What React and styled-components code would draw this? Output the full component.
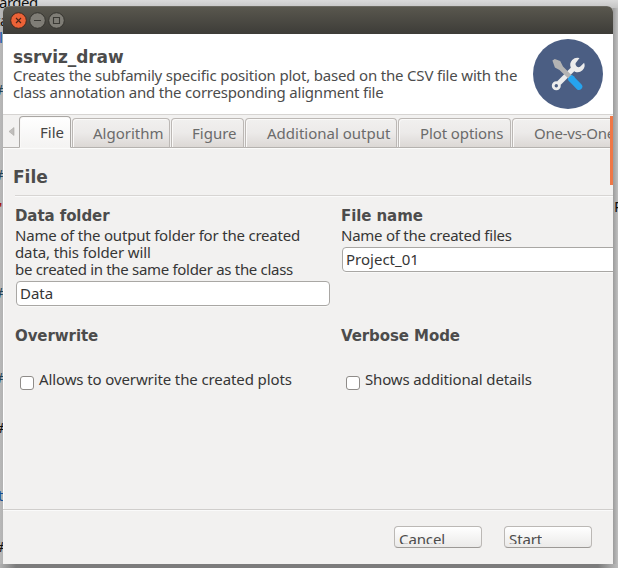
import React from "react";
import styled, { createGlobalStyle } from "styled-components";

const Global = createGlobalStyle`
  * { box-sizing: border-box; }
  html, body { margin: 0; height: 100%; overflow: hidden; }
  body { font: 15px/17px "Noto Sans", "Open Sans", sans-serif; color: #363636; }
`;

const Desktop = styled.div`
  position: relative;
  width: 618px;
  height: 568px;
  padding: 6px 5px 4px 3px;
  overflow: hidden;
  background: linear-gradient(90deg, #b9b9b9 0, #b2b2b2 3px, #b2b2b2 612px, #9c9c9c 613px, #c0c0c0 618px);
  &::before {
    content: "";
    position: absolute;
    inset: 0 0 auto 0;
    height: 8px;
    background: linear-gradient(#dadada, #c4c4c4);
  }
  &::after {
    content: "";
    position: absolute;
    inset: auto 0 0 0;
    height: 4px;
    background: linear-gradient(90deg, #b0b0b0, #7c7c7c 16px, #7c7c7c 598px, #bcbcbc);
  }
`;

const Behind = styled.span`
  position: absolute;
  left: ${(p) => p.$x}px;
  top: ${(p) => p.$y}px;
  color: ${(p) => p.$color || "#111"};
  letter-spacing: -0.5px;
  line-height: 17px;
  white-space: pre;
`;

const Window = styled.div`
  position: relative;
  z-index: 1;
  display: flex;
  flex-direction: column;
  width: 610px;
  height: 558px;
  overflow: hidden;
  border-radius: 6px 6px 0 0;
  background: #f2f1f0;
`;

const TitleBar = styled.div`
  display: flex;
  align-items: flex-start;
  gap: 3px;
  flex: 0 0 28px;
  padding: 5px 0 0 7px;
  background: linear-gradient(#59574e, #3d3c38);
  border-top: 1px solid #6a6860;
`;

const WindowButton = styled.svg`
  display: block;
  width: 16px;
  height: 16px;
  overflow: visible;
`;

const Header = styled.header`
  display: flex;
  justify-content: space-between;
  flex: 0 0 81px;
  padding: 5px 10px 0 10px;
  background: #fff;
  border-bottom: 1px solid #d6d4d2;
  color: #4c4c4c;
`;

const HeaderText = styled.div`
  padding-top: 8px;
`;

const Title = styled.h1`
  margin: 0;
  font: bold 17px/20px "DejaVu Sans", sans-serif;
  letter-spacing: ${(p) => p.$track || 0}px;
  color: #4c4c4c;
`;

const Heading = styled.h2`
  margin: 0;
  font: bold 15px/20px "DejaVu Sans", sans-serif;
  letter-spacing: -0.08px;
  color: #4c4c4c;
`;

const Line = styled.div`
  height: 17px;
  white-space: nowrap;
  letter-spacing: ${(p) => p.$track || 0}px;
`;

const Description = styled.div`
  padding-top: 1px;
`;

const Logo = styled.svg`
  flex: none;
  width: 70px;
  height: 70px;
`;

const TabBar = styled.nav`
  display: flex;
  align-items: flex-end;
  flex: 0 0 33px;
  overflow: hidden;
  box-shadow: inset 0 -1px #b5b2af;
`;

const ScrollArrow = styled.svg`
  flex: none;
  width: 16px;
  height: 33px;
`;

const Tab = styled.div`
  flex: none;
  width: ${(p) => p.$w}px;
  height: ${(p) => (p.$active ? 32 : 30)}px;
  margin-right: 1px;
  padding: ${(p) => (p.$active ? 7 : 6)}px 0 0 ${(p) => p.$indent}px;
  border: 1px solid ${(p) => (p.$active ? "#aaa7a4" : "#bcb8b5")};
  border-bottom-color: ${(p) => (p.$active ? "#f5f4f3" : "#b5b2af")};
  border-radius: 4px 4px 0 0;
  background: ${(p) => (p.$active ? "linear-gradient(#fff, #f4f3f2)" : "linear-gradient(#f1f0ef, #eceae9 50%, #dcd8d5)")};
  box-shadow: inset 1px 1px #faf9f8;
  color: ${(p) => (p.$active ? "#444" : "#6b6b6b")};
  letter-spacing: ${(p) => p.$track || 0}px;
  white-space: nowrap;
`;

const Panel = styled.main`
  flex: 1;
  min-height: 0;
  padding: 19px 0 0 9px;
  border-left: 1px solid #fff;
  box-shadow: inset 0 1px #fbfbfa;
`;

const Rule = styled.div`
  height: 2px;
  margin: 8px 0 9px 2px;
  background: linear-gradient(#d7d5d3 50%, #fafafa 50%);
`;

const Fields = styled.div`
  display: grid;
  grid-template-columns: 326px 326px;
  grid-template-rows: 120px 80px;
  padding-left: 2px;
`;

const Field = styled.section`
  display: flex;
  flex-direction: column;
`;

const Input = styled.input`
  width: 314px;
  height: 25px;
  margin: 3px 0 0 1px;
  padding: 0 3px 1px;
  border: 1px solid #a9a7a4;
  border-radius: 4px;
  outline: 0;
  background: #fff;
  box-shadow: 0 1px #f9f9f8;
  color: #363636;
  font: inherit;
`;

const CheckRow = styled.label`
  display: flex;
  gap: 5px;
  margin-top: 25px;
  padding-left: 5px;
`;

const CheckBox = styled.input`
  appearance: none;
  flex: none;
  width: 14px;
  height: 14px;
  margin: 5px 0 0;
  border: 1px solid #8f8c89;
  border-radius: 3px;
  background: #fff;
`;

const Footer = styled.footer`
  display: flex;
  gap: 22px;
  flex: 0 0 55px;
  padding: 16px 0 0 391px;
  border-top: 1px solid #d0cecc;
  box-shadow: inset 0 1px #fafafa;
`;

const Button = styled.button`
  display: flex;
  align-items: flex-start;
  width: 88px;
  height: 22px;
  padding: 4px 0 0 4px;
  overflow: hidden;
  border: 1px solid #bbb8b5;
  border-bottom-color: #9c9996;
  border-radius: 4px;
  background: linear-gradient(#fff, #ebeae9);
  color: #4c4c4c;
  font: inherit;
  letter-spacing: -0.1px;
`;

const ButtonLabel = styled.span`
  height: 13px;
  line-height: 17px;
  overflow: hidden;
`;

const ScrollThumb = styled.div`
  position: absolute;
  right: 0;
  top: 110px;
  width: 3px;
  height: 69px;
  background: #f07746;
`;

const behind = [
  [-1, -6, "arded"], [-5, 12, "ta"], [-1, 29, "l", "#1a4fae"],
  [-6, 81, "#", "#245"], [-6, 166, "#", "#245"], [-1, 199, "'", "#a00000"],
  [-6, 284, "#", "#245"], [-6, 369, "#", "#245"], [-5, 419, "#"],
  [-2, 487, "t", "#154f93"], [-5, 538, "#"], [614, 198, "P"],
];

const tabs = [
  { label: "File", w: 52, indent: 20, active: true },
  { label: "Algorithm", w: 98, indent: 20 },
  { label: "Figure", w: 73, indent: 20 },
  { label: "Additional output", w: 152, indent: 21 },
  { label: "Plot options", w: 113, indent: 21, track: -0.1 },
  { label: "One-vs-One", w: 130, indent: 21, track: -0.25 },
];

function TitleButton({ close, children }) {
  return (
    <WindowButton viewBox="0 0 16 16">
      <circle cx="8.5" cy="8.5" r="7.8" fill={close ? "#ec6237" : "#7f7d76"} stroke={close ? "#43291f" : "#35342f"} />
      <g fill="none" stroke={close ? "#4b2517" : "#3a3934"} strokeWidth="1.1">{children}</g>
    </WindowButton>
  );
}

export default function App() {
  return (
    <Desktop>
      <Global />
      {behind.map(([x, y, text, color], i) => (
        <Behind key={i} $x={x} $y={y} $color={color}>{text}</Behind>
      ))}
      <Window>
        <TitleBar>
          <TitleButton close><path d="M6 6l5 5m0-5l-5 5" /></TitleButton>
          <TitleButton><path d="M5 8.5h7" /></TitleButton>
          <TitleButton><path d="M5.5 5.5h6v6h-6z" /></TitleButton>
        </TitleBar>
        <Header>
          <HeaderText>
            <Title $track={-0.1}>ssrviz_draw</Title>
            <Line $track={-0.185}>Creates the subfamily specific position plot, based on the CSV file with the</Line>
            <Line $track={-0.2}>class annotation and the corresponding alignment file</Line>
          </HeaderText>
          <Logo viewBox="0 0 70 70">
            <circle cx="35" cy="35" r="35" fill="#4b5e83" />
            <path d="M25.8 44.2L42 28" stroke="#ececec" strokeWidth="5" />
            <circle cx="23.3" cy="46.8" r="3.1" fill="none" stroke="#ececec" strokeWidth="2.8" />
            <path d="M46.5 19a7.2 7.2 0 0 0-8.8 9.4l4.2 4.3a7 7 0 0 0 9.2-9l-3.5 3.5a2.7 2.7 0 0 1-4.1-4.1z" fill="#ececec" />
            <path d="M19.4 21.5l2.4-1.6 5.4 2 2.8 5.5 9.2 9.3-3.4 3.4-9.3-9.2-4.6-2.5z" fill="#b3b3b3" />
            <path d="M38.6 40l7.4 7.6" stroke="#26a4ee" strokeWidth="6.6" strokeLinecap="round" />
            <path d="M34.7 40.2l4.2-4.2 3 2-4.7 5z" fill="#26a4ee" />
          </Logo>
        </Header>
        <TabBar>
          <ScrollArrow viewBox="0 0 16 33"><path d="M11 12.5v8l-5-4z" fill="#c0bebc" stroke="#aaa8a5" strokeWidth=".6" /></ScrollArrow>
          {tabs.map(({ label, w, indent, track, active }) => (
            <Tab key={label} $w={w} $indent={indent} $track={track} $active={active}>{label}</Tab>
          ))}
        </TabBar>
        <Panel>
          <Title>File</Title>
          <Rule />
          <Fields>
            <Field>
              <Heading>Data folder</Heading>
              <Description>
                <Line $track={-0.2}>Name of the output folder for the created</Line>
                <Line $track={-0.12}>data, this folder will</Line>
                <Line $track={-0.31}>be created in the same folder as the class</Line>
              </Description>
              <Input defaultValue="Data" />
            </Field>
            <Field>
              <Heading>File name</Heading>
              <Description>
                <Line $track={-0.25}>Name of the created files</Line>
              </Description>
              <Input defaultValue="Project_01" />
            </Field>
            <Field>
              <Heading>Overwrite</Heading>
              <CheckRow><CheckBox type="checkbox" /><Line $track={-0.11}>Allows to overwrite the created plots</Line></CheckRow>
            </Field>
            <Field>
              <Heading>Verbose Mode</Heading>
              <CheckRow><CheckBox type="checkbox" /><Line $track={-0.14}>Shows additional details</Line></CheckRow>
            </Field>
          </Fields>
        </Panel>
        <Footer>
          <Button><ButtonLabel>Cancel</ButtonLabel></Button>
          <Button><ButtonLabel>Start</ButtonLabel></Button>
        </Footer>
        <ScrollThumb />
      </Window>
    </Desktop>
  );
}
